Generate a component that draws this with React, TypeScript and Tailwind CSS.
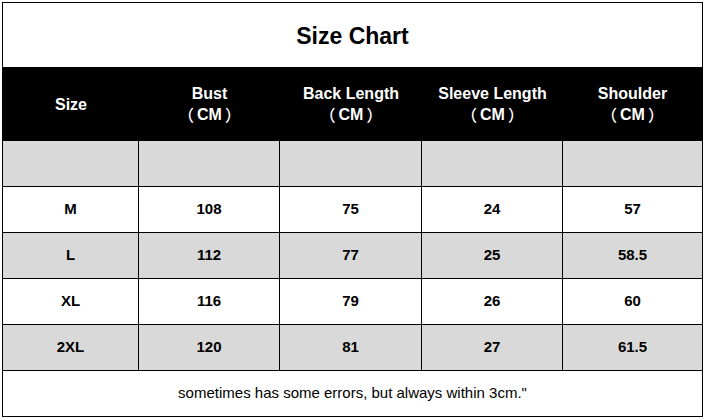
const columns = [
  { w: "w-[136px]", label: "Size", unit: false },
  { w: "w-[141px]", label: "Bust", unit: true },
  { w: "w-[142px]", label: "Back Length", unit: true },
  { w: "w-[141px]", label: "Sleeve Length", unit: true },
  { w: "w-[139px]", label: "Shoulder", unit: true },
];

const rows = [
  { gray: true, cells: ["", "", "", "", ""] },
  { gray: false, cells: ["M", "108", "75", "24", "57"] },
  { gray: true, cells: ["L", "112", "77", "25", "58.5"] },
  { gray: false, cells: ["XL", "116", "79", "26", "60"] },
  { gray: true, cells: ["2XL", "120", "81", "27", "61.5"] },
];

function Unit() {
  return (
    <span className="flex items-center">
      <span className="font-['Noto_Sans_CJK_SC',sans-serif] font-medium">（</span>
      <span className="px-[3px]">CM</span>
      <span className="font-['Noto_Sans_CJK_SC',sans-serif] font-medium">）</span>
    </span>
  );
}

export default function App() {
  return (
    <div className="w-[705px] h-[420px] bg-white pt-[2px] pl-[2px] font-['Liberation_Sans','Noto_Sans_CJK_SC',sans-serif] text-black">
      <div className="w-[701px] border border-black flex flex-col">
        {/* Title */}
        <div className="h-[64px] flex items-center justify-center text-[23px] font-bold pt-[2px]">
          Size Chart
        </div>

        {/* Header */}
        <div className="h-[74px] bg-black flex text-white font-bold text-[16px] leading-[21px]">
          {columns.map((c, i) => (
            <div key={i} className={`${c.w} flex flex-col items-center justify-center`}>
              <span>{c.label}</span>
              {c.unit && <Unit />}
            </div>
          ))}
        </div>

        {/* Data rows */}
        {rows.map((row, r) => (
          <div
            key={r}
            className={`h-[46px] flex border-b border-black ${row.gray ? "bg-[#d9d9d9]" : "bg-white"}`}
          >
            {row.cells.map((cell, i) => (
              <div
                key={i}
                className={`${columns[i].w} flex items-center justify-center text-[15px] font-bold ${
                  i < 4 ? "border-r border-black" : ""
                }`}
              >
                {cell}
              </div>
            ))}
          </div>
        ))}

        {/* Footer note */}
        <div className="h-[45px] flex items-center justify-center text-[15px]">
          sometimes has some errors, but always within 3cm."
        </div>
      </div>
    </div>
  );
}
